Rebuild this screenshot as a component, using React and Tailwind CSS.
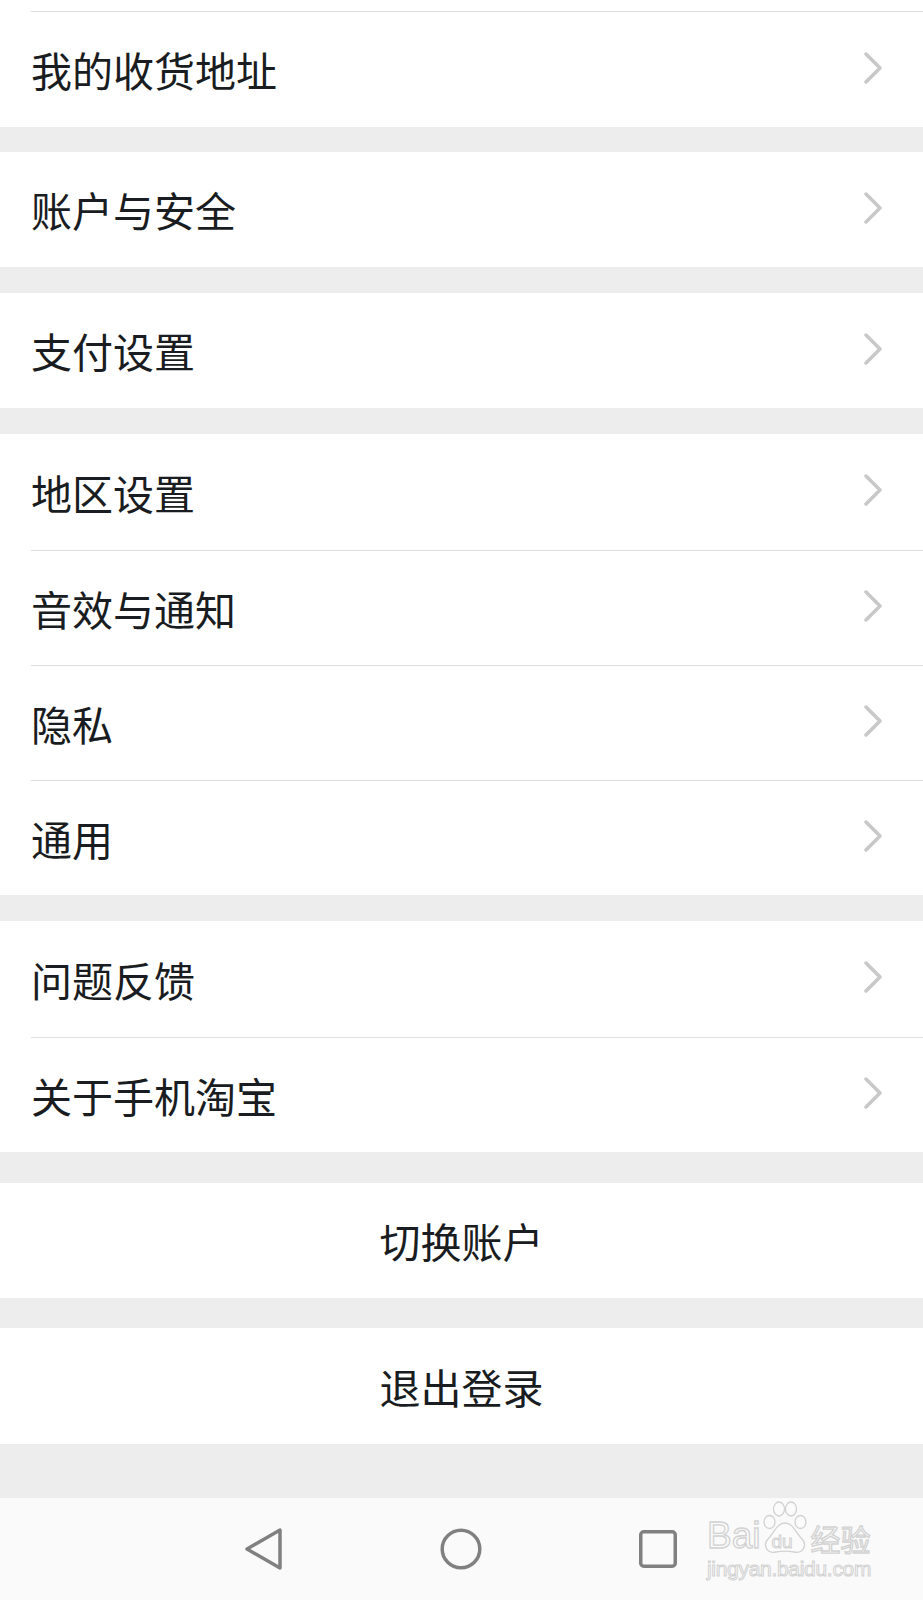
import React from "react"

const font = { fontFamily: '"Noto Sans CJK SC", "Noto Sans", sans-serif' }
const latin = { fontFamily: '"Liberation Sans", Arial, sans-serif' }

function Chevron() {
  return (
    <svg width="20" height="32" viewBox="0 0 20 32" className="mb-[4px]">
      <polyline
        points="3,2 17,16 3,30"
        fill="none"
        stroke="#c8c8c8"
        strokeWidth="3.5"
        strokeLinecap="round"
        strokeLinejoin="round"
      />
    </svg>
  )
}

function Row({ label, h = "h-[114px]" }) {
  return (
    <div className={`${h} bg-white flex items-center justify-between pl-[31px] pr-[40px]`}>
      <span className="text-[41px] leading-none text-[#191c20]">{label}</span>
      <Chevron />
    </div>
  )
}

function Divider() {
  return (
    <div className="bg-white">
      <div className="ml-[31px] h-px bg-[#dedede]" />
    </div>
  )
}

function CenterRow({ label, h }) {
  return (
    <div className={`${h} bg-white flex items-center justify-center`}>
      <span className="text-[41px] leading-none text-[#191c20]">{label}</span>
    </div>
  )
}

function NavBar() {
  return (
    <div className="relative h-[102px] bg-[#fafafa] flex items-center pl-[241px] gap-[154px]">
      {/* back */}
      <svg width="44" height="44" viewBox="0 0 44 44">
        <path
          d="M6 22 L39 3 L39 41 Z"
          fill="none"
          stroke="#808080"
          strokeWidth="3.5"
          strokeLinejoin="round"
        />
      </svg>
      {/* home */}
      <svg width="44" height="44" viewBox="0 0 44 44">
        <circle cx="22" cy="22" r="18.8" fill="none" stroke="#808080" strokeWidth="3.5" />
      </svg>
      {/* recents */}
      <svg width="44" height="44" viewBox="0 0 44 44">
        <rect x="3.75" y="4.75" width="34.5" height="34.5" rx="3" fill="none" stroke="#808080" strokeWidth="3.5" />
      </svg>

      {/* watermark */}
      <div className="absolute left-[707px] top-[3px] w-[172px] h-[82px]">
        <div className="flex items-end h-[54px]">
          <span className="text-[37px] leading-none text-[#fbfbfb] [-webkit-text-stroke:1.3px_#d2d2d2] mb-[1px]" style={latin}>
            Bai
          </span>
          <span className="relative w-[48px] h-[54px] mx-[1px] shrink-0">
            <svg width="48" height="54" viewBox="0 0 48 54" className="absolute left-0 top-0">
              <g fill="#fbfbfb" stroke="#d2d2d2" strokeWidth="1.3">
                <ellipse cx="18" cy="8" rx="5.5" ry="7" />
                <ellipse cx="30" cy="8" rx="5.5" ry="7" />
                <ellipse cx="8.5" cy="21" rx="5.5" ry="6.5" />
                <ellipse cx="39.5" cy="21" rx="5.5" ry="6.5" />
                <path d="M24 22 C32 22 35 32 41 38 C47 45 41 53 33 51 C28 50 20 50 15 51 C7 53 1 45 7 38 C13 32 16 22 24 22 Z" />
              </g>
            </svg>
            <span className="absolute left-[10px] top-[31px] text-[19px] leading-none text-[#fbfbfb] [-webkit-text-stroke:1px_#d2d2d2]" style={latin}>
              du
            </span>
          </span>
          <span className="text-[30px] leading-none text-[#fbfbfb] [-webkit-text-stroke:1.3px_#d2d2d2] mb-[2px]" style={font}>
            经验
          </span>
        </div>
        <div className="text-[21px] leading-none text-[#fbfbfb] [-webkit-text-stroke:1px_#d2d2d2] mt-[3px] tracking-[-0.3px]" style={latin}>
          jingyan.baidu.com
        </div>
      </div>
    </div>
  )
}

export default function App() {
  return (
    <div className="w-[923px] h-[1600px] bg-[#ededed] flex flex-col overflow-hidden" style={font}>
      <div className="h-[11px] bg-white" />
      <Divider />
      <Row label="我的收货地址" h="h-[115px]" />
      <div className="h-[25px] shrink-0" />
      <Row label="账户与安全" h="h-[115px]" />
      <div className="h-[26px] shrink-0" />
      <Row label="支付设置" h="h-[115px]" />
      <div className="h-[26px] shrink-0" />
      <Row label="地区设置" h="h-[116px]" />
      <Divider />
      <Row label="音效与通知" />
      <Divider />
      <Row label="隐私" />
      <Divider />
      <Row label="通用" />
      <div className="h-[26px] shrink-0" />
      <Row label="问题反馈" h="h-[116px]" />
      <Divider />
      <Row label="关于手机淘宝" />
      <div className="h-[31px] shrink-0" />
      <CenterRow label="切换账户" h="h-[115px]" />
      <div className="h-[30px] shrink-0" />
      <CenterRow label="退出登录" h="h-[116px]" />
      <div className="h-[54px] shrink-0" />
      <NavBar />
    </div>
  )
}
